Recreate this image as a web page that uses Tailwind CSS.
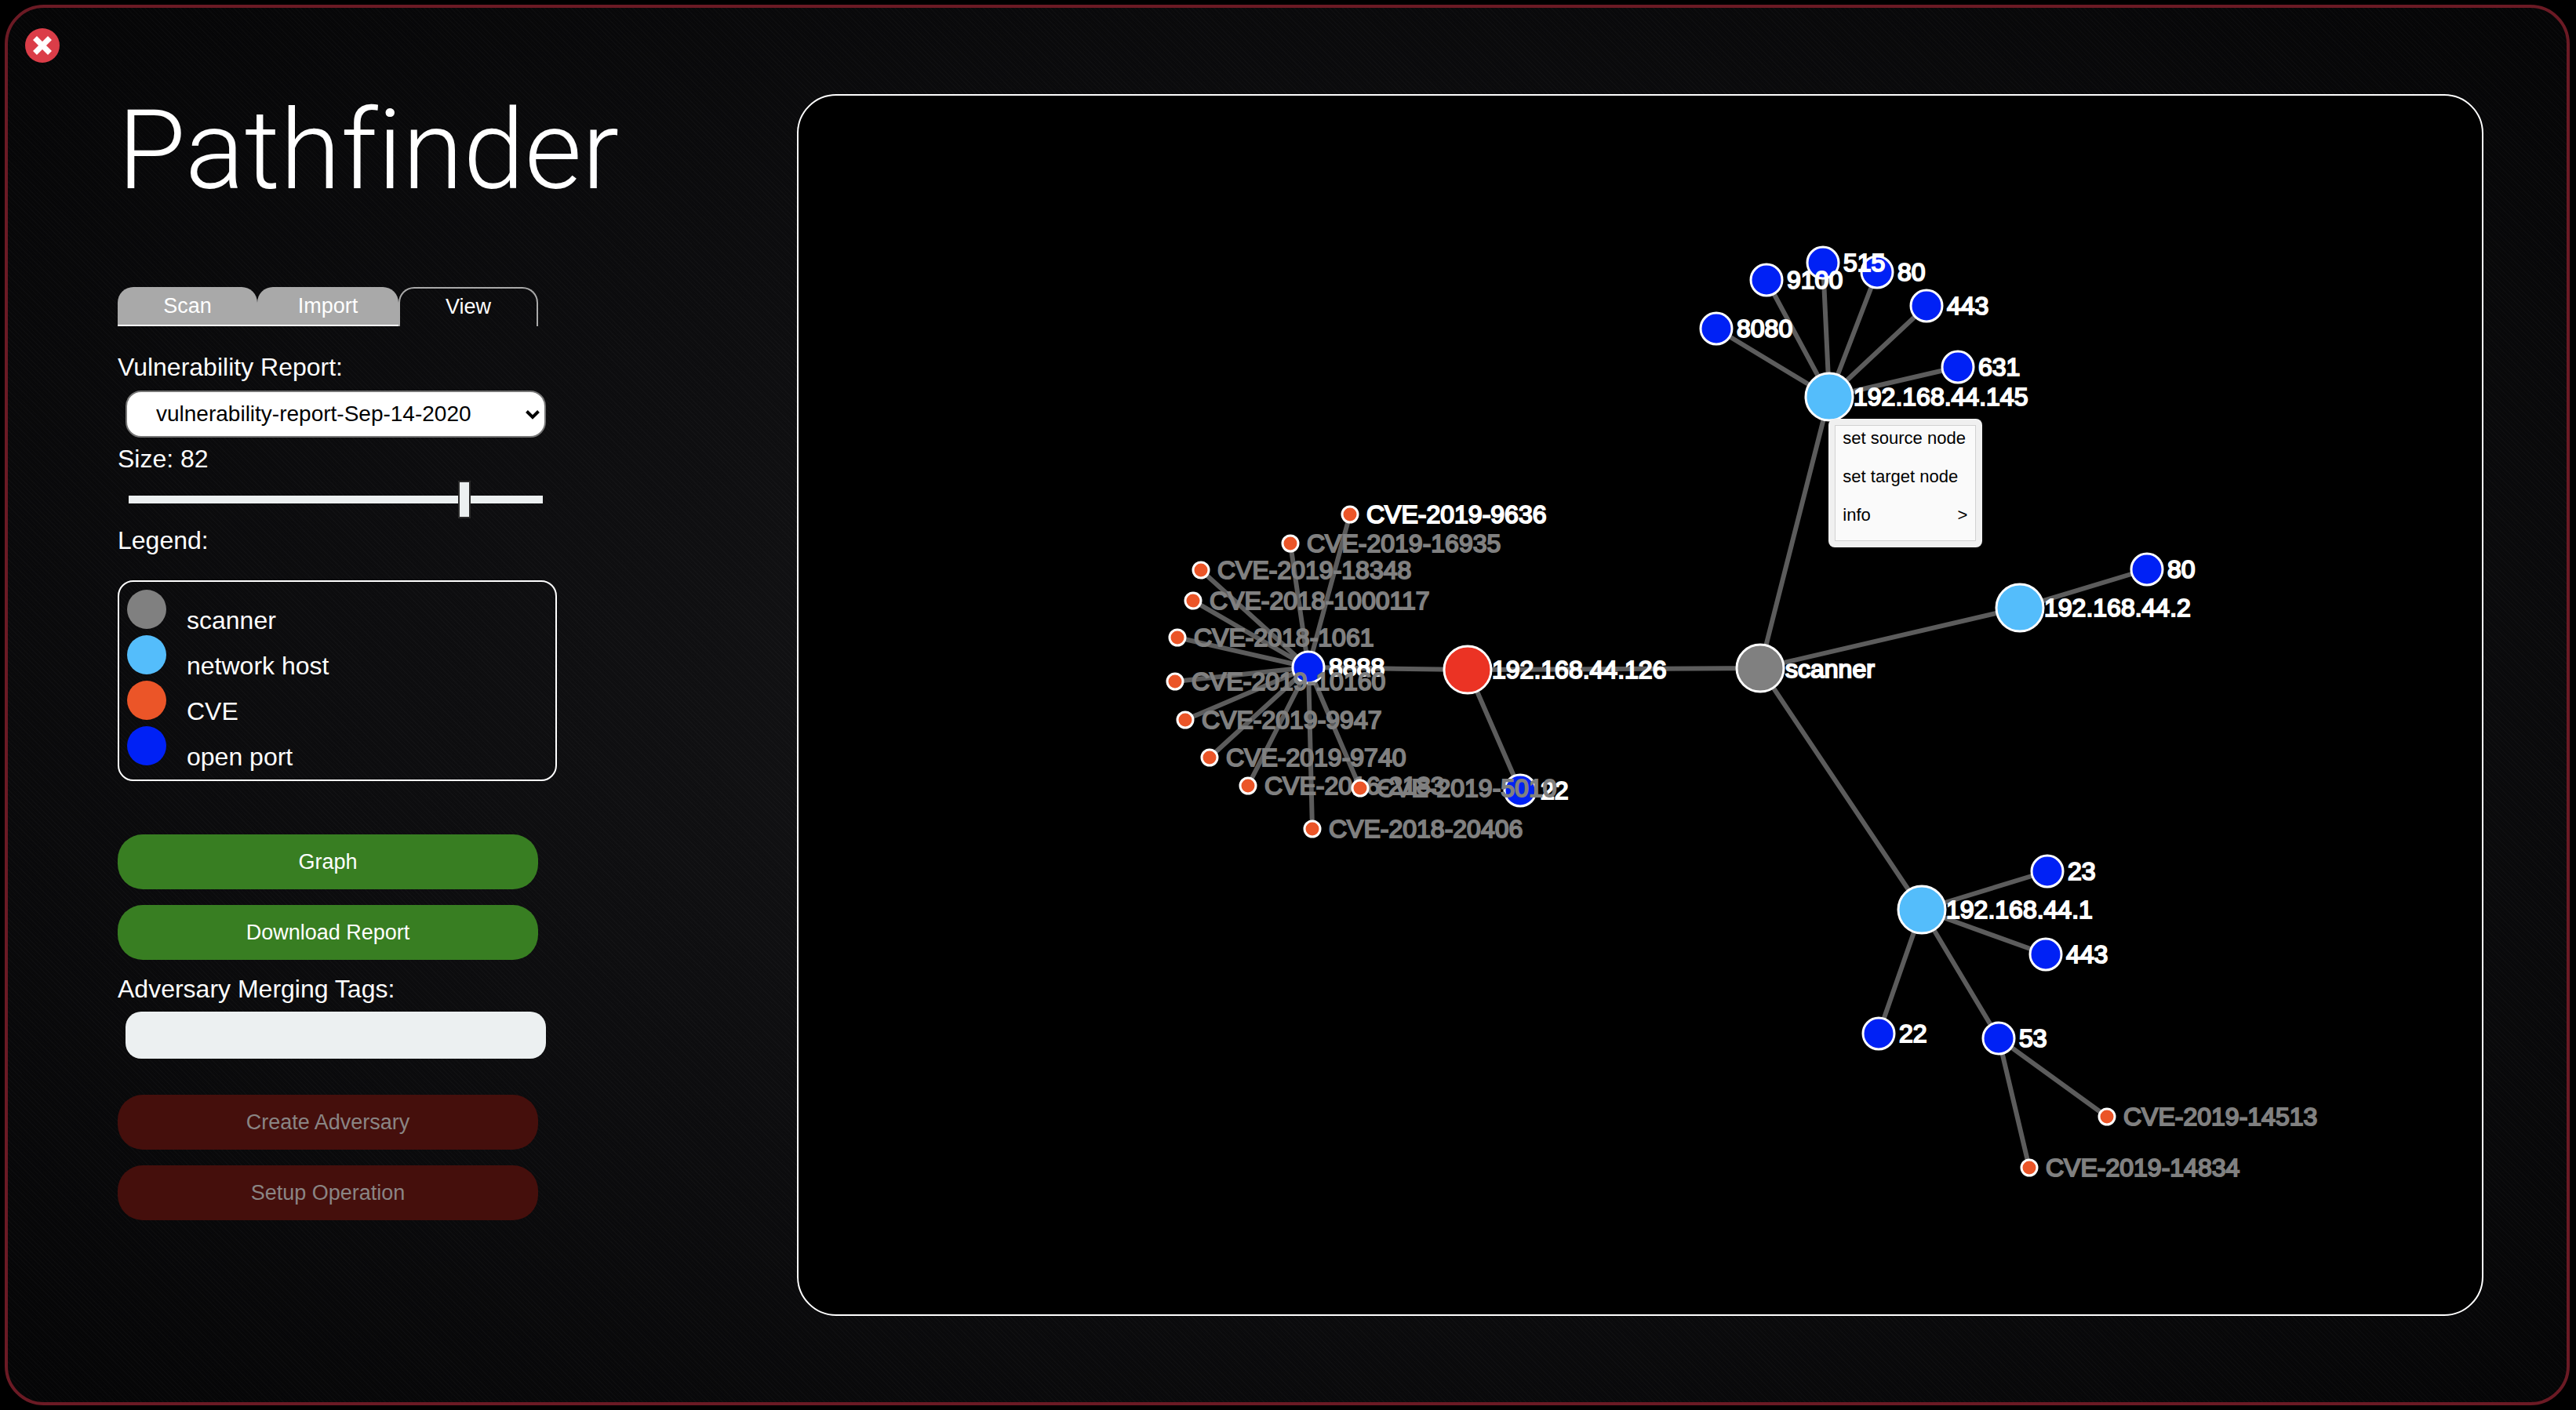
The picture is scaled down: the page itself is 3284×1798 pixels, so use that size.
<!DOCTYPE html>
<html lang="en">
<head>
<meta charset="utf-8">
<title>Pathfinder</title>
<script src="https://cdn.jsdelivr.net/npm/@tailwindcss/browser@4"></script>
</head>
<body class="min-h-screen bg-black p-[6px] pr-2 font-['Liberation_Sans',Arial,sans-serif] text-white">
<main class="relative flex min-h-[calc(100vh-12px)] items-start rounded-[50px] border-4 border-[#6b1a24] bg-[repeating-linear-gradient(45deg,#ffffff05_0_1px,transparent_1px_4px),radial-gradient(ellipse_at_center,#151517_0%,#0d0d0f_50%,#050506_100%)] pr-[106px] pl-[140px]">
  <button type="button" aria-label="Close" class="absolute top-[26px] left-[22px] size-11 rounded-full bg-[#db3d48]">
    <svg viewBox="0 0 44 44" class="size-11" fill="none" stroke="#fff" stroke-width="7"><path d="M12.500 12.500L31.500 31.500M31.500 12.500L12.500 31.500"/></svg>
  </button>

  <section class="mr-[306px] w-[560px] shrink-0 pt-[92px]">
    <h1 class="h-[180px] font-['Roboto'] text-[141px] leading-[180px] font-light whitespace-nowrap [font-variant-ligatures:none]">Pathfinder</h1>

    <nav class="mt-[84px] flex h-[50px] w-[536px] text-[27px] leading-[42px]">
      <button type="button" class="w-[178px] rounded-t-[20px] border-b-2 border-white bg-[#a9a9a9]">Scan</button>
      <button type="button" class="w-[180px] rounded-t-[20px] border-b-2 border-white bg-[#a9a9a9]">Import</button>
      <button type="button" class="w-[178px] rounded-t-[20px] border-2 border-b-0 border-[#a9a9a9] pb-[2px]">View</button>
    </nav>

    <form class="text-[32px] leading-9">
      <label for="report" class="mt-[34px] block">Vulnerability Report:</label>
      <div class="relative mt-3 ml-[10px] w-[536px]">
        <select id="report" class="block h-[60px] w-full appearance-none rounded-[20px] border-2 border-[#767676] bg-white pl-[37px] text-[28px] text-black">
          <option>vulnerability-report-Sep-14-2020</option>
        </select>
        <svg viewBox="0 0 18 14" class="pointer-events-none absolute top-6 right-2 h-[14px] w-[18px]" fill="none" stroke="#000" stroke-width="4"><path d="M1.500 2.500L9 10L16.500 2.500"/></svg>
      </div>
      <label for="size" class="mt-[9px] block">Size: 82</label>
      <input id="size" type="range" min="0" max="100" value="82" class="mt-[10px] ml-[14px] block h-12 w-[528px] appearance-none bg-transparent [&::-webkit-slider-runnable-track]:h-[10px] [&::-webkit-slider-runnable-track]:bg-[#ecf0f1] [&::-webkit-slider-thumb]:-mt-[19px] [&::-webkit-slider-thumb]:h-12 [&::-webkit-slider-thumb]:w-4 [&::-webkit-slider-thumb]:appearance-none [&::-webkit-slider-thumb]:border-2 [&::-webkit-slider-thumb]:border-[#2b2b2b] [&::-webkit-slider-thumb]:bg-[#ecf0f1]">
      <h2 class="mt-[10px]">Legend:</h2>
      <ul class="mt-[33px] flex h-[256px] flex-col gap-2 rounded-[20px] border-2 border-white px-[10px] pt-[10px]">
        <li class="flex h-[50px] gap-[26px]"><span class="size-[50px] rounded-full bg-[#808080]"></span><span class="pt-[21px]">scanner</span></li>
        <li class="flex h-[50px] gap-[26px]"><span class="size-[50px] rounded-full bg-[#54bdfb]"></span><span class="pt-[21px]">network host</span></li>
        <li class="flex h-[50px] gap-[26px]"><span class="size-[50px] rounded-full bg-[#eb5528]"></span><span class="pt-[21px]">CVE</span></li>
        <li class="flex h-[50px] gap-[26px]"><span class="size-[50px] rounded-full bg-[#0021f5]"></span><span class="pt-[21px]">open port</span></li>
      </ul>
      <div class="mt-[68px] flex w-[536px] flex-col gap-5 text-[27px]">
        <button type="button" class="h-[70px] rounded-[32px] bg-[#387e22]">Graph</button>
        <button type="button" class="h-[70px] rounded-[32px] bg-[#387e22]">Download Report</button>
      </div>
      <label for="tags" class="mt-[19px] block">Adversary Merging Tags:</label>
      <input id="tags" type="text" class="mt-[11px] ml-[10px] block h-[60px] w-[536px] rounded-[20px] bg-[#ecf0f1] px-5 text-[28px] text-black">
      <div class="mt-[46px] flex w-[536px] flex-col gap-5 text-[27px]">
        <button type="button" disabled class="h-[70px] rounded-[32px] bg-[#450f0c] text-[#8a8584]">Create Adversary</button>
        <button type="button" disabled class="h-[70px] rounded-[32px] bg-[#450f0c] text-[#8a8584]">Setup Operation</button>
      </div>
    </form>
  </section>

  <section class="relative mt-[110px] min-w-0 flex-1 overflow-hidden rounded-[50px] border-2 border-white bg-black">
    <svg viewBox="1018 122 2146 1554" class="block h-auto w-full text-[32px]">
      <g stroke="#5c5c5c" stroke-width="6">
        <path d="M2188 419L2332 506M2252 357L2332 506M2324 335L2332 506M2393 347L2332 506M2456 390L2332 506M2496 468L2332 506M2332 506L2244 852"/>
        <path d="M2244 852L2575 775L2737 726M2244 852L1871 854L1668 851M1871 854L1938 1008M2244 852L2450 1160"/>
        <path d="M2450 1160L2610 1111M2450 1160L2608 1217M2450 1160L2395 1318M2450 1160L2548 1324L2686 1424M2548 1324L2587 1489"/>
        <path d="M1668 851L1721 656M1668 851L1645 693M1668 851L1531 727M1668 851L1521 766M1668 851L1501 813M1668 851L1498 869M1668 851L1511 918M1668 851L1542 966M1668 851L1591 1002M1668 851L1734 1005M1668 851L1673 1057"/>
      </g>
      <g stroke="#fff" stroke-width="3">
        <g transform="translate(2244 852)"><circle r="30" fill="#808080"/><text x="32" y="12" fill="#fff" stroke-width="2">scanner</text></g>
        <g transform="translate(2450 1160)"><circle r="30" fill="#54bdfb"/><text x="31" y="11" fill="#fff" stroke-width="2">192.168.44.1</text></g>
        <g transform="translate(2575 775)"><circle r="30" fill="#54bdfb"/><text x="31" y="11" fill="#fff" stroke-width="2">192.168.44.2</text></g>
        <g transform="translate(1871 854)"><circle r="30" fill="#eb3324"/><text x="31" y="11" fill="#fff" stroke-width="2">192.168.44.126</text></g>
        <g transform="translate(2332 506)"><circle r="30" fill="#54bdfb"/><text x="31" y="11" fill="#fff" stroke-width="2">192.168.44.145</text></g>
      </g>
      <g stroke="#fff" stroke-width="3" fill="#0021f5">
        <g transform="translate(2395 1318)"><circle r="20"/><text x="26" y="11" fill="#fff" stroke-width="2">22</text></g>
        <g transform="translate(2610 1111)"><circle r="20"/><text x="26" y="11" fill="#fff" stroke-width="2">23</text></g>
        <g transform="translate(2548 1324)"><circle r="20"/><text x="26" y="11" fill="#fff" stroke-width="2">53</text></g>
        <g transform="translate(2608 1217)"><circle r="20"/><text x="26" y="11" fill="#fff" stroke-width="2">443</text></g>
        <g transform="translate(2737 726)"><circle r="20"/><text x="26" y="11" fill="#fff" stroke-width="2">80</text></g>
        <g transform="translate(1938 1008)"><circle r="20"/><text x="26" y="11" fill="#fff" stroke-width="2">22</text></g>
        <g transform="translate(1668 851)"><circle r="20"/><text x="26" y="11" fill="#fff" stroke-width="2">8888</text></g>
        <g transform="translate(2393 347)"><circle r="20"/><text x="26" y="11" fill="#fff" stroke-width="2">80</text></g>
        <g transform="translate(2456 390)"><circle r="20"/><text x="26" y="11" fill="#fff" stroke-width="2">443</text></g>
        <g transform="translate(2324 335)"><circle r="20"/><text x="26" y="11" fill="#fff" stroke-width="2">515</text></g>
        <g transform="translate(2496 468)"><circle r="20"/><text x="26" y="11" fill="#fff" stroke-width="2">631</text></g>
        <g transform="translate(2188 419)"><circle r="20"/><text x="26" y="11" fill="#fff" stroke-width="2">8080</text></g>
        <g transform="translate(2252 357)"><circle r="20"/><text x="26" y="11" fill="#fff" stroke-width="2">9100</text></g>
      </g>
      <g stroke="#fff" stroke-width="3" fill="#eb5528">
        <g transform="translate(2686 1424)"><circle r="10"/><text x="21" y="11" fill="#808080" stroke="#808080" stroke-width="2">CVE-2019-14513</text></g>
        <g transform="translate(2587 1489)"><circle r="10"/><text x="21" y="11" fill="#808080" stroke="#808080" stroke-width="2">CVE-2019-14834</text></g>
        <g transform="translate(1721 656)"><circle r="10"/><text x="21" y="11" fill="#fff" stroke-width="2">CVE-2019-9636</text></g>
        <g transform="translate(1645 693)"><circle r="10"/><text x="21" y="11" fill="#808080" stroke="#808080" stroke-width="2">CVE-2019-16935</text></g>
        <g transform="translate(1531 727)"><circle r="10"/><text x="21" y="11" fill="#808080" stroke="#808080" stroke-width="2">CVE-2019-18348</text></g>
        <g transform="translate(1521 766)"><circle r="10"/><text x="21" y="11" fill="#808080" stroke="#808080" stroke-width="2">CVE-2018-1000117</text></g>
        <g transform="translate(1501 813)"><circle r="10"/><text x="21" y="11" fill="#808080" stroke="#808080" stroke-width="2">CVE-2018-1061</text></g>
        <g transform="translate(1498 869)"><circle r="10"/><text x="21" y="11" fill="#808080" stroke="#808080" stroke-width="2">CVE-2019-10160</text></g>
        <g transform="translate(1511 918)"><circle r="10"/><text x="21" y="11" fill="#808080" stroke="#808080" stroke-width="2">CVE-2019-9947</text></g>
        <g transform="translate(1542 966)"><circle r="10"/><text x="21" y="11" fill="#808080" stroke="#808080" stroke-width="2">CVE-2019-9740</text></g>
        <g transform="translate(1591 1002)"><circle r="10"/><text x="21" y="11" fill="#808080" stroke="#808080" stroke-width="2">CVE-2016-2183</text></g>
        <g transform="translate(1734 1005)"><circle r="10"/><text x="21" y="11" fill="#808080" stroke="#808080" stroke-width="2">CVE-2019-5010</text></g>
        <g transform="translate(1673 1057)"><circle r="10"/><text x="21" y="11" fill="#808080" stroke="#808080" stroke-width="2">CVE-2018-20406</text></g>
      </g>
    </svg>
    <div class="absolute top-[26.5%] left-[61.2%] w-[196px] rounded-lg bg-[#f0f0f0] p-2">
      <ul class="h-[148px] border border-[#d2d2d2] bg-[#fafafa] text-[22px] leading-8 text-black">
        <li><button type="button" class="block h-[49px] w-full pb-4 pl-[9px] text-left">set source node</button></li>
        <li><button type="button" class="block h-[49px] w-full pb-4 pl-[9px] text-left">set target node</button></li>
        <li><button type="button" class="flex h-[49px] w-full items-center justify-between pr-[10px] pb-4 pl-[9px]"><span>info</span><span>&gt;</span></button></li>
      </ul>
    </div>
  </section>
</main>
</body>
</html>
